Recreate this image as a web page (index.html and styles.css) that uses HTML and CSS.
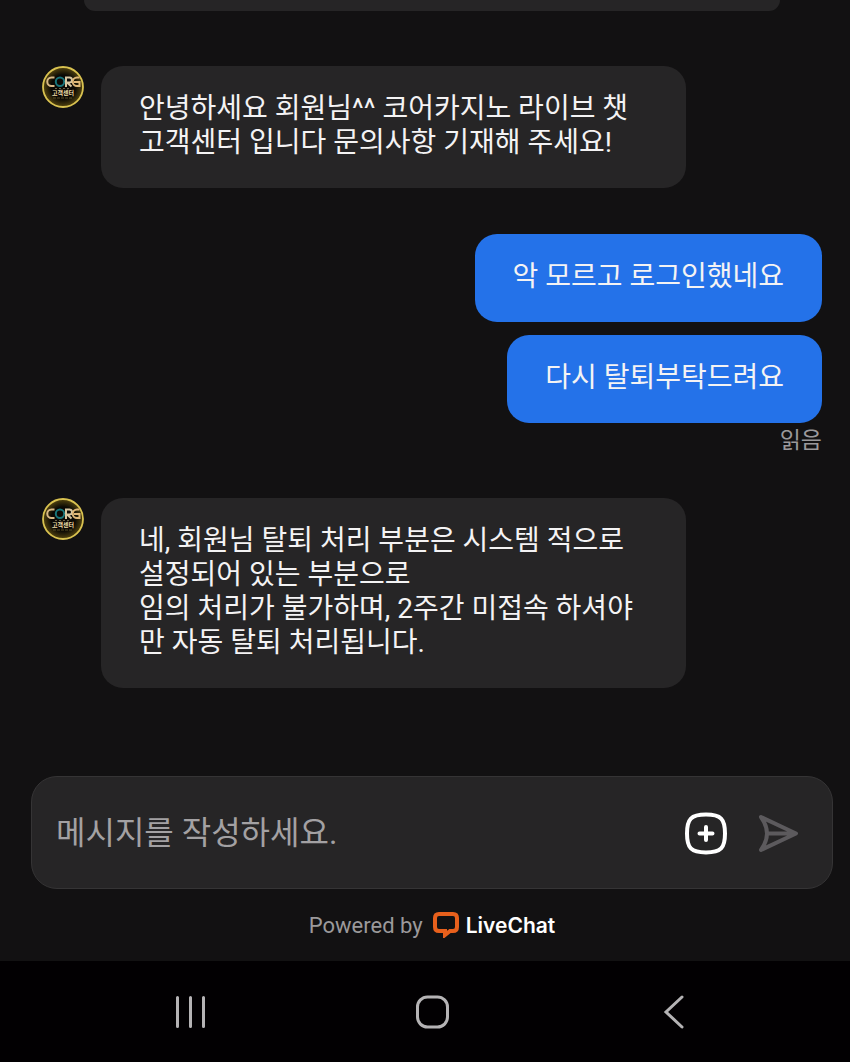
FILE: index.html
```html
<!DOCTYPE html>
<html lang="ko">
<head>
    <meta charset="UTF-8">
    <meta name="viewport" content="width=device-width, initial-scale=1.0">
    <title>LiveChat</title>
    <link rel="stylesheet" href="styles.css">
</head>
<body>
    <svg class="symbols" aria-hidden="true">
        <defs>
            <radialGradient id="badge-glow">
                <stop offset="0.6" stop-color="#0b0904"/>
                <stop offset="1" stop-color="#544510"/>
            </radialGradient>
            <symbol id="badge" viewBox="0 0 42 42">
                <circle cx="21" cy="21" r="20" fill="url(#badge-glow)" stroke="#d9c250" stroke-width="1.8"/>
                <g fill="none" stroke-width="2">
                    <path d="M12.500 11.500H9.500a4.200 4.200 0 0 0 0 8.500h3" stroke="#d8b987"/>
                    <circle cx="18" cy="15.700" r="4.200" stroke="#17747a"/>
                    <path d="M24 21v-9.500h3.500a2.500 2.500 0 0 1 0 5H25l4.500 4" stroke="#d8c6a0"/>
                    <path d="M37.500 11.500H35a4.200 4.200 0 0 0 0 8.500h2.500v-4H32" stroke="#e0b878"/>
                </g>
                <path d="M13 22.500h16" stroke="#6b6347" stroke-dasharray="2 2"/>
                <text x="21" y="29" class="badge-text">고객센터</text>
                <path d="M11 32h20" stroke="#5b5025" stroke-dasharray="3 1"/>
            </symbol>
        </defs>
    </svg>

    <main class="chat">
        <div class="previous-card"></div>

        <div class="message-row">
            <svg class="avatar"><use href="#badge"/></svg>
            <p class="bubble agent">안녕하세요 회원님^^ 코어카지노 라이브 챗 고객센터 입니다 문의사항 기재해 주세요!</p>
        </div>

        <div class="my-messages">
            <p class="bubble mine">악 모르고 로그인했네요</p>
            <p class="bubble mine">다시 탈퇴부탁드려요</p>
            <span class="status">읽음</span>
        </div>

        <div class="message-row">
            <svg class="avatar"><use href="#badge"/></svg>
            <p class="bubble agent">네, 회원님 탈퇴 처리 부분은 시스템 적으로 설정되어 있는 부분으로<br>임의 처리가 불가하며, 2주간 미접속 하셔야만 자동 탈퇴 처리됩니다.</p>
        </div>
    </main>

    <form class="composer">
        <input type="text" class="composer-input" aria-label="메시지" placeholder="메시지를 작성하세요.">
        <button type="button" class="icon-btn" aria-label="추가">
            <svg width="44" height="44" viewBox="0 0 44 44" fill="none" stroke="#fff" stroke-linecap="round">
                <path d="M22 3.500C37 3.500 41 8 41 22.500S37 41.500 22 41.500 3 37 3 22.500 7 3.500 22 3.500z" stroke-width="4"/>
                <path d="M22 16v13M15.500 22.500h13" stroke-width="4"/>
            </svg>
        </button>
        <button type="submit" class="icon-btn" aria-label="보내기">
            <svg width="44" height="44" viewBox="0 0 44 44" fill="none" stroke="#5c5a5d" stroke-width="4" stroke-linecap="round" stroke-linejoin="round">
                <path d="M5 6L40 22.500 5 39Q11 30.500 11 22.500T5 6zM11 22.500h28"/>
            </svg>
        </button>
    </form>

    <footer class="powered">
        <span>Powered by</span>
        <a href="#" class="brand">
            <svg width="26" height="26" viewBox="0 0 26 26" fill="none">
                <path d="M6 2h14q4 0 4 4v9q0 4-4 4h-3l-5 4v-4H6q-4 0-4-4V6q0-4 4-4z" stroke="#e8601c" stroke-width="4"/>
            </svg>
            LiveChat
        </a>
    </footer>

    <nav class="system-nav">
        <button type="button" class="icon-btn" aria-label="최근 앱">
            <svg width="36" height="36" viewBox="0 0 36 36" stroke="#b5b3b5" stroke-width="3" stroke-linecap="round">
                <path d="M4.500 3.500v29M17.500 3.500v29M30.500 3.500v29"/>
            </svg>
        </button>
        <button type="button" class="icon-btn" aria-label="홈">
            <svg width="36" height="36" viewBox="0 0 36 36" fill="none" stroke="#b5b3b5" stroke-width="3">
                <rect x="2.500" y="3" width="30" height="30" rx="10"/>
            </svg>
        </button>
        <button type="button" class="icon-btn" aria-label="뒤로">
            <svg width="36" height="36" viewBox="0 0 36 36" fill="none" stroke="#b5b3b5" stroke-width="3" stroke-linecap="round">
                <path d="M26 3L10 18l16 15"/>
            </svg>
        </button>
    </nav>
</body>
</html>
```

FILE: styles.css
```css
* {
    box-sizing: border-box;
}

body {
    margin: 0;
    min-height: 100vh;
    display: flex;
    flex-direction: column;
    background-color: #121112;
    color: #f4f3f4;
    font-family: Roboto, "Noto Sans CJK KR", sans-serif;
}

p {
    margin: 0;
}

.symbols {
    position: absolute;
    width: 0;
    height: 0;
}

.badge-text {
    fill: #f0dfa8;
    font-size: 6px;
    font-weight: bold;
    text-anchor: middle;
}

.chat {
    flex: 1;
    padding: 0 28px 0 42px;
}

.previous-card {
    height: 11px;
    margin: 0 42px 55px;
    background-color: #262526;
    border-radius: 0 0 22px 22px;
}

.message-row {
    display: flex;
    gap: 17px;
}

.avatar {
    flex: none;
    width: 42px;
    height: 42px;
}

.bubble {
    padding: 26px 38px 28px;
    border-radius: 22px;
    font-size: 28px;
    line-height: 34px;
}

.agent {
    width: 75%;
    background-color: #262526;
}

.mine {
    background-color: #2472e9;
}

.my-messages {
    display: flex;
    flex-direction: column;
    align-items: flex-end;
    gap: 13px;
    margin: 46px 0 42px;
}

.status {
    margin-top: -10px;
    color: #9b999b;
    font-size: 23px;
    line-height: 30px;
}

.composer {
    display: flex;
    align-items: center;
    gap: 28px;
    height: 113px;
    margin: 0 17px 0 31px;
    padding: 0 32px 0 24px;
    background-color: #262526;
    border: 1px solid #353435;
    border-radius: 26px;
}

.composer-input {
    flex: 1;
    min-width: 0;
    padding: 0;
    border: none;
    outline: none;
    background: none;
    color: #f4f3f4;
    font-family: inherit;
    font-size: 32px;
}

.composer-input::placeholder {
    color: #a3a1a3;
    opacity: 1;
}

.icon-btn {
    display: flex;
    padding: 0;
    border: none;
    background: none;
    cursor: pointer;
}

.powered {
    display: flex;
    justify-content: center;
    align-items: center;
    gap: 10px;
    height: 72px;
    padding-left: 14px;
    color: #9b999b;
    font-size: 22px;
}

.brand {
    display: flex;
    align-items: center;
    gap: 7px;
    color: #fff;
    font-family: Inter, sans-serif;
    font-size: 21px;
    font-weight: 600;
    text-decoration: none;
}

.system-nav {
    display: flex;
    justify-content: space-between;
    align-items: center;
    height: 101px;
    padding: 0 158px 0 173px;
    background-color: #020002;
}
```
